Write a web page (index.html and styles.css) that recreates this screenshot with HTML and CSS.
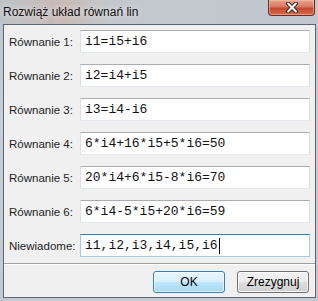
FILE: index.html
```html
<!DOCTYPE html>
<html lang="pl">

<head>
    <meta charset="UTF-8">
    <meta name="viewport" content="width=device-width, initial-scale=1.0">
    <title>Rozwiąż układ równań lin</title>
    <link rel="stylesheet" href="styles.css">
</head>

<body>
    <div class="window">
        <div class="titlebar">
            <span class="title">Rozwiąż układ równań lin</span>
            <span class="close">
                <svg width="14" height="11" viewBox="0 0 14 11">
                    <path d="M3 1.5 L11 9.5 M11 1.5 L3 9.5" stroke="#3a2a2a" stroke-width="4" stroke-linecap="round"/>
                    <path d="M3 1.5 L11 9.5 M11 1.5 L3 9.5" stroke="#ffffff" stroke-width="2" stroke-linecap="round"/>
                </svg>
            </span>
        </div>

        <div class="client">
            <div class="form">
                <div class="row">
                    <span class="label">Równanie 1:</span>
                    <div class="field">i1=i5+i6</div>
                </div>
                <div class="row">
                    <span class="label">Równanie 2:</span>
                    <div class="field">i2=i4+i5</div>
                </div>
                <div class="row">
                    <span class="label">Równanie 3:</span>
                    <div class="field">i3=i4-i6</div>
                </div>
                <div class="row">
                    <span class="label">Równanie 4:</span>
                    <div class="field">6*i4+16*i5+5*i6=50</div>
                </div>
                <div class="row">
                    <span class="label">Równanie 5:</span>
                    <div class="field">20*i4+6*i5-8*i6=70</div>
                </div>
                <div class="row">
                    <span class="label">Równanie 6:</span>
                    <div class="field">6*i4-5*i5+20*i6=59</div>
                </div>
                <div class="row">
                    <span class="label">Niewiadome:</span>
                    <div class="field focused">i1,i2,i3,i4,i5,i6<span class="caret"></span></div>
                </div>
            </div>

            <div class="separator"></div>

            <div class="buttons">
                <button class="btn default">OK</button>
                <button class="btn">Zrezygnuj</button>
            </div>
        </div>
    </div>
</body>

</html>
```

FILE: styles.css
```css
* {
    margin: 0;
    padding: 0;
    box-sizing: border-box;
}

body {
    font-family: 'Liberation Sans', Arial, sans-serif;
    font-size: 12px;
    color: #1e1e1e;
    background: #c9cfd6;
}

.window {
    width: 318px;
    height: 301px;
    background: linear-gradient(180deg, #bcc3cb 0%, #c8ced5 40%, #c3c9d0 100%);
    overflow: hidden;
}

.titlebar {
    height: 24px;
    display: flex;
    justify-content: space-between;
    align-items: flex-start;
    padding-left: 3px;
    background: linear-gradient(90deg, #bfc3c8 0%, #c9b9b6 20%, #c4c8cd 35%, #c0c7cf 100%);
}

.title {
    font-size: 12px;
    color: #111;
    line-height: 14px;
    margin-top: 5px;
    text-shadow: 0 0 6px rgba(255, 255, 255, 0.9);
}

.close {
    width: 47px;
    height: 16px;
    margin-right: 3px;
    border: 1px solid #6e2b22;
    border-top: none;
    border-radius: 0 0 4px 4px;
    background: linear-gradient(180deg, #e6a58f 0%, #d67962 45%, #c44a30 55%, #d86a4c 100%);
    display: flex;
    align-items: center;
    justify-content: center;
    box-shadow: inset 0 0 0 1px rgba(255, 200, 180, 0.5);
}

.client {
    margin-left: 3px;
    width: 313px;
    height: 274px;
    border: 1px solid #5d6670;
    background: #f0f0f0;
}

.form {
    display: flex;
    flex-direction: column;
    gap: 11px;
    padding: 5px 5px 0 5px;
}

.row {
    display: flex;
    align-items: center;
    justify-content: space-between;
    height: 23px;
}

.label {
    font-size: 11.5px;
    color: #1e1e1e;
}

.field {
    width: 230px;
    height: 23px;
    background: #fff;
    border: 1px solid #dbdfe6;
    border-top-color: #abadb3;
    border-bottom-color: #e3e9ef;
    font-family: 'Liberation Mono', 'Courier New', monospace;
    font-size: 13px;
    line-height: 21px;
    padding-left: 4px;
    color: #111;
    display: flex;
    align-items: center;
}

.field.focused {
    border-color: #a4c9e3;
    border-top-color: #3d7bad;
}

.caret {
    width: 1px;
    height: 16px;
    background: #000;
    margin-left: 1px;
}

.separator {
    margin-top: 6px;
    height: 2px;
    border-top: 1px solid #a0a0a0;
    border-bottom: 1px solid #ffffff;
}

.buttons {
    display: flex;
    justify-content: flex-end;
    gap: 12px;
    padding: 6px 6px 0 0;
}

.btn {
    width: 72px;
    height: 22px;
    font-family: 'Liberation Sans', Arial, sans-serif;
    font-size: 12px;
    color: #000;
    border: 1px solid #707070;
    border-radius: 3px;
    background: linear-gradient(180deg, #f2f2f2 0%, #ebebeb 49%, #dddddd 50%, #cfcfcf 100%);
    box-shadow: inset 0 0 0 1px rgba(255, 255, 255, 0.8);
}

.btn.default {
    border-color: #3c7fb1;
    background: linear-gradient(180deg, #eaf6fd 0%, #d9f0fc 49%, #bee6fd 50%, #a7d9f5 100%);
    box-shadow: inset 0 0 0 1px rgba(255, 255, 255, 0.6);
}
```
